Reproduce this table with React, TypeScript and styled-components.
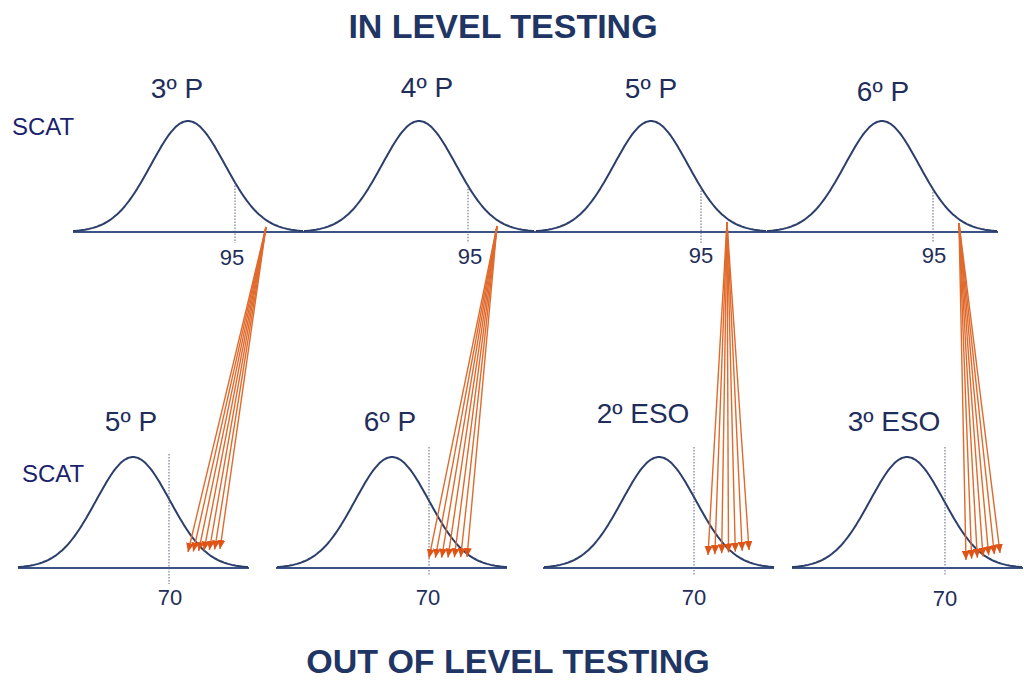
import styled, { createGlobalStyle } from "styled-components";

const GlobalStyle = createGlobalStyle`
  html, body {
    margin: 0;
    padding: 0;
    background: #ffffff;
  }
  body {
    font-family: "Liberation Sans", Arial, sans-serif;
  }
`;

interface Bell {
  cx: number;
  base: number;
}

interface Cutoff {
  x: number;
  top?: number;
  bottom: number;
  label: string;
  labelX: number;
  labelY: number;
}

interface Fan {
  sx: number;
  sy: number;
  x0: number;
  x1: number;
  y0: number;
  y1: number;
}

interface Grade {
  text: string;
  x: number;
  y: number;
}

const HALF = 115;
const PEAK = 111;
const SIGMA = 37;

const topBells: Bell[] = [188, 419, 651, 882].map((cx) => ({ cx, base: 232 }));
const bottomBells: Bell[] = [133, 392, 659, 907].map((cx) => ({ cx, base: 568 }));

const topGrades: Grade[] = [
  { text: "3º P", x: 177, y: 98 },
  { text: "4º P", x: 427, y: 97 },
  { text: "5º P", x: 651, y: 98 },
  { text: "6º P", x: 883, y: 101 }
];

const bottomGrades: Grade[] = [
  { text: "5º P", x: 131, y: 431 },
  { text: "6º P", x: 390, y: 431 },
  { text: "2º ESO", x: 643, y: 423 },
  { text: "3º ESO", x: 894, y: 431 }
];

const topCutoffs: Cutoff[] = [
  { x: 235, bottom: 243, label: "95", labelX: 232, labelY: 265 },
  { x: 468, bottom: 243, label: "95", labelX: 470, labelY: 264 },
  { x: 701, bottom: 243, label: "95", labelX: 701, labelY: 263 },
  { x: 933, bottom: 243, label: "95", labelX: 934, labelY: 263 }
];

const bottomCutoffs: Cutoff[] = [
  { x: 169, top: 454, bottom: 584, label: "70", labelX: 170, labelY: 605 },
  { x: 429, top: 447, bottom: 576, label: "70", labelX: 428, labelY: 605 },
  { x: 694, top: 447, bottom: 576, label: "70", labelX: 694, labelY: 605 },
  { x: 945, top: 447, bottom: 576, label: "70", labelX: 945, labelY: 606 }
];

const fans: Fan[] = [
  { sx: 266, sy: 227, x0: 188, x1: 220, y0: 552, y1: 549 },
  { sx: 497, sy: 226, x0: 429, x1: 467, y0: 558, y1: 557 },
  { sx: 727, sy: 222, x0: 708, x1: 749, y0: 555, y1: 550 },
  { sx: 959, sy: 223, x0: 966, x1: 1000, y0: 560, y1: 553 }
];

const ARROWS = 7;

function bellY(dx: number, base: number) {
  return base - PEAK * Math.exp(-(dx * dx) / (2 * SIGMA * SIGMA));
}

function bellPath({ cx, base }: Bell) {
  const points: string[] = [];
  for (let dx = -HALF; dx <= HALF; dx += 2) {
    points.push(`${(cx + dx).toFixed(1)},${bellY(dx, base).toFixed(1)}`);
  }
  return `M${points.join(" L")}`;
}

function cutoffTop(cut: Cutoff, bells: Bell[]) {
  if (cut.top !== undefined) return cut.top;
  const bell = bells.reduce((a, b) => (Math.abs(b.cx - cut.x) < Math.abs(a.cx - cut.x) ? b : a));
  return bellY(cut.x - bell.cx, bell.base);
}

export default function App() {
  return (
    <>
      <GlobalStyle />
      <Page>
        <Title $top={9} $shift={-18}>IN LEVEL TESTING</Title>
        <Chart viewBox="0 43 1024 601" width={1024} height={601}>
          <defs>
            <marker
              id="head"
              markerUnits="userSpaceOnUse"
              markerWidth={9}
              markerHeight={8}
              refX={9}
              refY={4}
              orient="auto"
            >
              <path d="M0,0 L9,4 L0,8 Z" fill="#de5416" />
            </marker>
          </defs>

          <Axis x1={73} y1={232} x2={998} y2={232} />
          {[18, 276, 543, 792].map((x) => (
            <Axis key={x} x1={x} y1={568} x2={x + 231} y2={568} />
          ))}

          {topBells.map((b) => (
            <Curve key={`t${b.cx}`} d={bellPath(b)} />
          ))}
          {bottomBells.map((b) => (
            <Curve key={`b${b.cx}`} d={bellPath(b)} />
          ))}

          {topCutoffs.map((c) => (
            <g key={`tc${c.x}`}>
              <Dotted x1={c.x} y1={cutoffTop(c, topBells)} x2={c.x} y2={c.bottom} />
              <Score x={c.labelX} y={c.labelY}>{c.label}</Score>
            </g>
          ))}
          {bottomCutoffs.map((c) => (
            <g key={`bc${c.x}`}>
              <Dotted x1={c.x} y1={c.top} x2={c.x} y2={c.bottom} />
              <Score x={c.labelX} y={c.labelY}>{c.label}</Score>
            </g>
          ))}

          {topGrades.map((g) => (
            <GradeLabel key={`tg${g.text}`} x={g.x} y={g.y}>{g.text}</GradeLabel>
          ))}
          {bottomGrades.map((g) => (
            <GradeLabel key={`bg${g.text}`} x={g.x} y={g.y}>{g.text}</GradeLabel>
          ))}

          <TestLabel x={12} y={135}>SCAT</TestLabel>
          <TestLabel x={22} y={482}>SCAT</TestLabel>

          {fans.map((f) => (
            <g key={`f${f.sx}`}>
              {Array.from({ length: ARROWS }, (_, i) => {
                const t = i / (ARROWS - 1);
                return (
                  <Arrow
                    key={i}
                    x1={f.sx}
                    y1={f.sy}
                    x2={f.x0 + (f.x1 - f.x0) * t}
                    y2={f.y0 + (f.y1 - f.y0) * t}
                    markerEnd="url(#head)"
                  />
                );
              })}
            </g>
          ))}
        </Chart>
        <Title $top={0} $shift={-8}>OUT OF LEVEL TESTING</Title>
      </Page>
    </>
  );
}

const Page = styled.div`
  width: 1024px;
  height: 681px;
  overflow: hidden;
  display: flex;
  flex-direction: column;
  align-items: center;
  background: #ffffff;
`;

const Title = styled.h1<{ $top: number; $shift: number }>`
  margin: 0;
  margin-left: ${({ $shift }) => $shift}px;
  padding-top: ${({ $top }) => $top}px;
  height: 34px;
  font-family: "Liberation Sans", Arial, sans-serif;
  font-size: 34px;
  line-height: 34px;
  font-weight: 700;
  color: #1f3564;
  text-align: center;
  white-space: nowrap;
`;

const Chart = styled.svg`
  display: block;
  flex: none;
`;

const Axis = styled.line`
  stroke: #3a5486;
  stroke-width: 2;
`;

const Curve = styled.path`
  fill: none;
  stroke: #2c3f6c;
  stroke-width: 2;
  stroke-linejoin: round;
`;

const Dotted = styled.line`
  stroke: #5a6480;
  stroke-width: 1;
  stroke-dasharray: 1.5 1.5;
`;

const Score = styled.text`
  font-family: "Liberation Sans", Arial, sans-serif;
  font-size: 22px;
  fill: #1f2d5a;
  text-anchor: middle;
`;

const GradeLabel = styled.text`
  font-family: "Liberation Sans", Arial, sans-serif;
  font-size: 28px;
  fill: #1f2d5a;
  text-anchor: middle;
`;

const TestLabel = styled.text`
  font-family: "Liberation Sans", Arial, sans-serif;
  font-size: 24px;
  fill: #1b1f6c;
`;

const Arrow = styled.line`
  stroke: #e06a2c;
  stroke-width: 1.4;
`;
